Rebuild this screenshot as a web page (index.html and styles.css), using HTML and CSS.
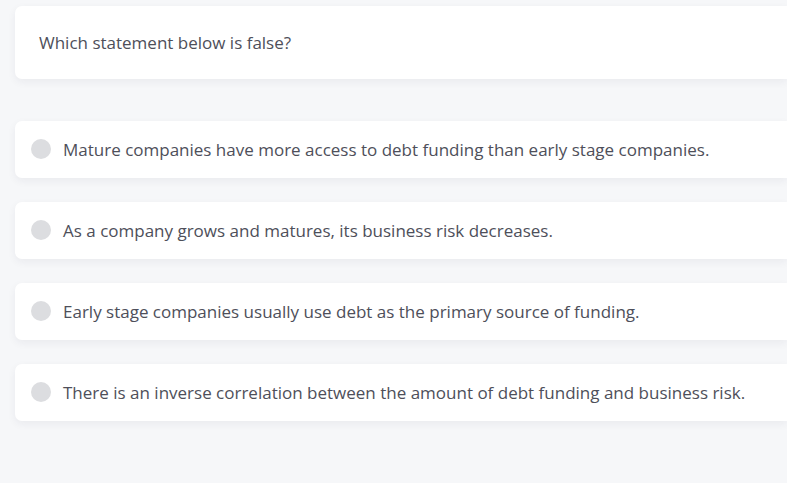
FILE: index.html
```html
<!DOCTYPE html>
<html>
<head>
<meta charset="utf-8">
<link rel="stylesheet" href="styles.css">
</head>
<body>
<div class="page">
  <div class="question card">Which statement below is false?</div>
  <div class="options">
    <div class="option card"><span class="radio"></span><span class="label">Mature companies have more access to debt funding than early stage companies.</span></div>
    <div class="option card"><span class="radio"></span><span class="label">As a company grows and matures, its business risk decreases.</span></div>
    <div class="option card"><span class="radio"></span><span class="label">Early stage companies usually use debt as the primary source of funding.</span></div>
    <div class="option card"><span class="radio"></span><span class="label">There is an inverse correlation between the amount of debt funding and business risk.</span></div>
  </div>
</div>
</body>
</html>
```
FILE: styles.css
```css
html, body {
  margin: 0;
  padding: 0;
  background: #f6f7f9;
  overflow: hidden;
  height: 100%;
}
body {
  font-family: "Open Sans", "Noto Sans", sans-serif;
  color: #4e4f5a;
  font-size: 17px;
}
.page {
  padding: 6px 0 0 15px;
}
.card {
  background: #ffffff;
  border-radius: 7px 0 0 7px;
  box-shadow: 0 3px 8px rgba(30, 40, 60, 0.06);
}
.question {
  height: 73px;
  box-sizing: border-box;
  padding: 0 24px 1px;
  display: flex;
  align-items: center;
}
.options {
  margin-top: 42px;
  display: flex;
  flex-direction: column;
  gap: 24px;
}
.option {
  height: 57px;
  box-sizing: border-box;
  display: flex;
  align-items: center;
  padding-left: 16px;
  padding-bottom: 1px;
  gap: 12px;
}
.radio {
  width: 20px;
  height: 20px;
  border-radius: 50%;
  background: #dcdde0;
  flex: none;
}
```
